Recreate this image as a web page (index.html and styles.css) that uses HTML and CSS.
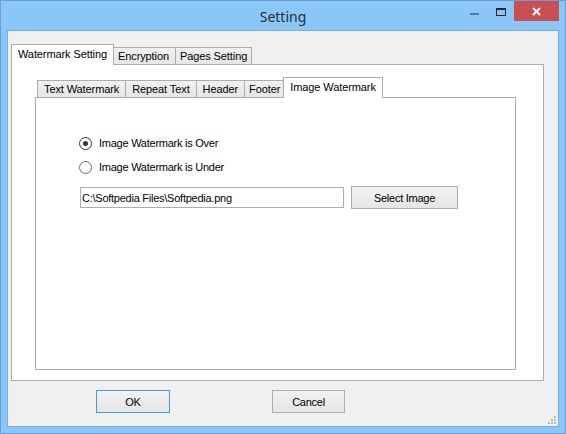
FILE: index.html
```html
<!DOCTYPE html>
<html>
<head>
<meta charset="utf-8">
<title>Setting</title>
<link rel="stylesheet" href="styles.css">
</head>
<body>
<div class="window">
  <div class="titlebar">
    <div class="title">Setting</div>
    <div class="controls">
      <div class="ctl ctl-min"><span class="bar"></span></div>
      <div class="ctl ctl-max"><span class="box"></span></div>
      <div class="ctl ctl-close">
        <svg width="9" height="9" viewBox="0 0 9 9"><path d="M1 1 L8 8 M8 1 L1 8" stroke="#fff" stroke-width="1.8" fill="none"/></svg>
      </div>
    </div>
  </div>
  <div class="client">
    <div class="tabctl outer">
      <div class="tabstrip">
        <div class="tab sel">Watermark Setting</div>
        <div class="tab">Encryption</div>
        <div class="tab tight">Pages Setting</div>
      </div>
      <div class="page outer-page">
        <div class="tabctl inner">
          <div class="tabstrip">
            <div class="tab">Text Watermark</div>
            <div class="tab">Repeat Text</div>
            <div class="tab">Header</div>
            <div class="tab tight">Footer</div>
            <div class="tab sel">Image Watermark</div>
          </div>
          <div class="page inner-page">
            <div class="radio-row">
              <span class="radio checked"><span class="dot"></span></span>
              <span class="label">Image Watermark is Over</span>
            </div>
            <div class="radio-row">
              <span class="radio"></span>
              <span class="label">Image Watermark is Under</span>
            </div>
            <div class="file-row">
              <input class="textbox" type="text" value="C:\Softpedia Files\Softpedia.png">
              <button class="btn select-btn">Select Image</button>
            </div>
          </div>
        </div>
      </div>
    </div>
    <div class="actions">
      <button class="btn default">OK</button>
      <button class="btn">Cancel</button>
    </div>
    <svg class="grip" width="9" height="8" viewBox="0 0 9 8">
      <rect x="6" y="0" width="2" height="2" fill="#b9b9b9"/>
      <rect x="3" y="3" width="2" height="2" fill="#b9b9b9"/>
      <rect x="6" y="3" width="2" height="2" fill="#b9b9b9"/>
      <rect x="0" y="6" width="2" height="2" fill="#b9b9b9"/>
      <rect x="3" y="6" width="2" height="2" fill="#b9b9b9"/>
      <rect x="6" y="6" width="2" height="2" fill="#b9b9b9"/>
    </svg>
  </div>
</div>
</body>
</html>
```
FILE: styles.css
```css
html, body {
  margin: 0;
  padding: 0;
  background: #8ac7f8;
}
body {
  font-family: "Liberation Sans", Arial, sans-serif;
  font-size: 11px;
  letter-spacing: -0.25px;
  color: #000;
}
.window {
  width: 566px;
  height: 434px;
  box-sizing: border-box;
  border: 1px solid #6c9fd1;
  background: #8ac7f8;
  padding: 0 7px 7px 7px;
  display: flex;
  flex-direction: column;
}
.titlebar {
  height: 29px;
  flex: none;
  display: grid;
  grid-template-columns: 1fr auto 1fr;
}
.title {
  grid-column: 2;
  font-family: "Noto Sans", "Open Sans", sans-serif;
  font-size: 14px;
  letter-spacing: 0;
  line-height: 29px;
  padding-top: 1px;
  color: #2c2c2c;
}
.controls {
  grid-column: 3;
  justify-self: end;
  display: flex;
  align-items: flex-start;
  margin-right: -1px;
}
.ctl {
  height: 20px;
  display: flex;
  justify-content: center;
  align-items: flex-start;
  box-sizing: border-box;
}
.ctl-min {
  width: 28px;
  padding-top: 12px;
}
.bar {
  width: 9px;
  height: 2px;
  background: #5a7893;
}
.ctl-max {
  width: 26px;
  padding-top: 7px;
}
.box {
  width: 10px;
  height: 8px;
  box-sizing: border-box;
  border: 1px solid #272727;
  border-top-width: 2px;
}
.ctl-close {
  width: 45px;
  background: #c75050;
  align-items: center;
}
.ctl-close svg {
  display: block;
}
.client {
  flex: 1;
  margin: 0 -1px -1px -1px;
  border: 1px solid #79aee0;
  background: #f0f0f0;
  position: relative;
  display: flex;
  flex-direction: column;
}
.tabctl {
  display: flex;
  flex-direction: column;
}
.tabctl.outer {
  margin: 13px 0 0 3px;
  width: 533px;
}
.tabctl.inner {
  margin: 12px 0 0 23px;
  width: 481px;
}
.tabstrip {
  display: flex;
  align-items: flex-end;
  height: 21px;
  padding-left: 2px;
  margin-bottom: -1px;
  position: relative;
  z-index: 1;
}
.tab {
  height: 17px;
  box-sizing: border-box;
  margin-bottom: 1px;
  margin-left: -1px;
  border: 1px solid #acacac;
  border-bottom: none;
  padding: 0 6px;
  line-height: 16px;
  letter-spacing: -0.1px;
  background: linear-gradient(#f0f0f0, #e6e6e6);
  white-space: nowrap;
}
.tab.tight {
  padding: 0 4px;
}
.tab:first-child {
  margin-left: 0;
}
.tab.sel {
  height: 21px;
  margin: 0 -2px;
  padding: 1px 6px 0 6px;
  background: #fff;
  position: relative;
  z-index: 2;
}
.tab.sel:first-child {
  margin-left: -2px;
}
.page {
  background: #fff;
  border: 1px solid #acacac;
  box-sizing: border-box;
}
.outer-page {
  height: 317px;
}
.inner-page {
  height: 273px;
  padding: 39px 0 0 43px;
}
.radio-row {
  display: flex;
  align-items: center;
  height: 13px;
  margin-bottom: 11px;
}
.radio {
  width: 13px;
  height: 13px;
  box-sizing: border-box;
  border: 1px solid #6d6d6d;
  border-radius: 50%;
  background: #fff;
  display: flex;
  align-items: center;
  justify-content: center;
  margin-right: 7px;
}
.radio.checked {
  border-color: #333;
}
.dot {
  width: 5px;
  height: 5px;
  border-radius: 50%;
  background: #333;
}
.label {
  line-height: 13px;
  white-space: nowrap;
}
.file-row {
  display: flex;
  align-items: center;
  margin-top: 12px;
  padding-left: 1px;
}
.textbox {
  width: 264px;
  height: 21px;
  box-sizing: border-box;
  border: 1px solid #abadb3;
  padding: 0 1px;
  margin: 0;
  font-family: "Liberation Sans", Arial, sans-serif;
  font-size: 11px;
  letter-spacing: -0.25px;
  color: #000;
  background: #fff;
  outline: none;
}
.btn {
  height: 23px;
  box-sizing: border-box;
  border: 1px solid #adadad;
  background: linear-gradient(#f2f2f2, #e5e5e5);
  font-family: "Liberation Sans", Arial, sans-serif;
  font-size: 11px;
  letter-spacing: -0.25px;
  color: #000;
  padding: 0;
  margin: 0;
  width: 73px;
}
.select-btn {
  width: 107px;
  margin-left: 7px;
}
.btn.default {
  border-color: #3d9bf2;
  width: 74px;
}
.actions {
  display: flex;
  gap: 102px;
  padding-left: 88px;
  margin-top: 9px;
}
.grip {
  position: absolute;
  right: 1px;
  bottom: 2px;
}
```
